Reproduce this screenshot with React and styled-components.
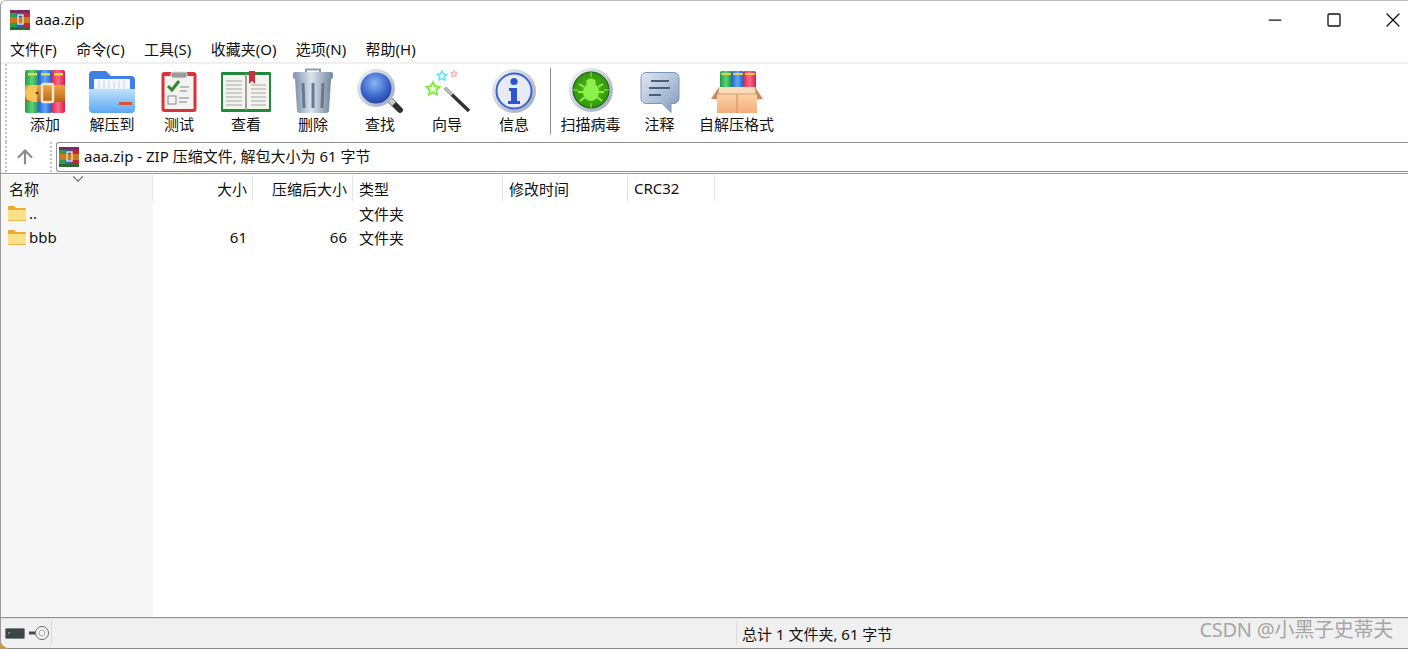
import React from 'react';
import styled, { createGlobalStyle } from 'styled-components';
import { ArrowUp, Minus, Square, X, ChevronDown } from 'lucide-react';

const GlobalStyle = createGlobalStyle`
  html, body { margin: 0; padding: 0; background: #fff; }
  body { font-family: "Noto Sans", "Noto Sans CJK SC", sans-serif; font-size: 15px; color: #111; overflow: hidden; }
`;

const Desktop = styled.div`
  width: 1408px;
  height: 649px;
  background: linear-gradient(#fff 50%, #c79d3c 50%);
`;

const Window = styled.div`
  position: relative;
  display: flex;
  flex-direction: column;
  width: 100%;
  height: 100%;
  box-sizing: border-box;
  border-top: 1px solid #bdbdbd;
  border-left: 1px solid #9a9a9a;
  border-bottom: 1px solid #8a8a8a;
  border-top-left-radius: 6px;
  border-bottom-left-radius: 9px;
  background: #fff;
  overflow: hidden;
`;

const TitleBar = styled.div`
  display: flex;
  align-items: center;
  height: 37px;
  padding-left: 9px;
  flex: none;
`;

const TitleText = styled.span`
  margin-left: 5px;
  padding-bottom: 2px;
`;

const WindowButtons = styled.div`
  display: flex;
  gap: 29px;
  margin-left: auto;
`;

const WindowButton = styled.div`
  display: flex;
  align-items: center;
  justify-content: center;
  width: 30px;
  height: 37px;
  color: #111;
`;

const MenuBar = styled.div`
  display: flex;
  align-items: center;
  height: 24px;
  box-sizing: content-box;
  padding-left: 9px;
  gap: 19.4px;
  flex: none;
  border-bottom: 2px solid #f0f0f0;
`;

const MenuItem = styled.span`
  padding-bottom: 3px;
  white-space: nowrap;
`;

const ToolBar = styled.div`
  display: flex;
  align-items: flex-start;
  height: 78px;
  padding-left: 4px;
  flex: none;
`;

const Gripper = styled.div`
  align-self: stretch;
  width: 0;
  margin-right: ${(p) => p.$gap}px;
  border-left: 2px dotted #c4c4c4;
`;

const ToolButton = styled.div`
  display: flex;
  flex-direction: column;
  align-items: center;
  width: ${(p) => p.$width || 67}px;
  flex: none;
  padding-top: 4px;
`;

const ToolIcon = styled.div`
  display: flex;
  justify-content: center;
  height: 46px;
`;

const ToolLabel = styled.span`
  height: 20px;
  line-height: 20px;
  white-space: nowrap;
`;

const ToolSeparator = styled.div`
  width: 1px;
  height: 66px;
  margin: 4px 3px 0 2px;
  background: #8c8c8c;
  flex: none;
`;

const AddressBar = styled.div`
  display: flex;
  align-items: stretch;
  height: 30px;
  padding-left: 4px;
  flex: none;
`;

const UpButton = styled.div`
  display: flex;
  align-items: center;
  justify-content: center;
  width: 36px;
  margin-right: 7px;
  color: #8a8a8a;
`;

const AddressField = styled.div`
  display: flex;
  align-items: center;
  flex: 1;
  padding-left: 2px;
  border: 1px solid #8f8f8f;
  border-right: none;
  border-top-left-radius: 3px;
  border-bottom-left-radius: 3px;
`;

const AddressText = styled.span`
  margin-left: 5px;
  padding-bottom: 3px;
`;

const FileArea = styled.div`
  position: relative;
  flex: 1;
  display: flex;
  flex-direction: column;
  min-height: 0;
  margin-top: 1px;
  border-top: 1px solid #9a9a9a;
`;

const SortArrow = styled.div`
  position: absolute;
  top: -4px;
  left: 68px;
  color: #777;
  line-height: 0;
`;

const FileRow = styled.div`
  display: grid;
  grid-template-columns: 152px 100px 100px 150px 125px 87px 1fr;
  height: ${(p) => p.$height || 24}px;
  align-items: center;
  flex: none;
`;

const HeaderRow = styled(FileRow)`
  margin-top: 1px;
`;

const HeaderCell = styled.div`
  display: flex;
  align-items: center;
  height: 100%;
  box-sizing: border-box;
  padding: 0 5px 0 ${(p) => (p.$sorted ? 8 : 6)}px;
  justify-content: ${(p) => (p.$right ? 'flex-end' : 'flex-start')};
  border-right: 1px solid #e4e4e4;
  background: ${(p) => (p.$sorted ? '#f7f7f7' : 'transparent')};
`;

const Cell = styled.div`
  display: flex;
  align-items: center;
  height: 100%;
  box-sizing: border-box;
  padding: 0 6px;
  justify-content: ${(p) => (p.$right ? 'flex-end' : 'flex-start')};
  background: ${(p) => (p.$sorted ? '#f7f7f7' : 'transparent')};
`;

const NameCell = styled(Cell)`
  padding-left: 7px;
  gap: 3px;
`;

const EmptyColumn = styled.div`
  flex: 1;
  width: 152px;
  background: #f7f7f7;
`;

const StatusBar = styled.div`
  display: flex;
  align-items: stretch;
  height: 31px;
  flex: none;
  box-sizing: border-box;
  border-top: 1px solid #8f8f8f;
  background: #f0f0f0;
  box-shadow: inset 0 1px 0 #e2e2e2;
`;

const StatusIcons = styled.div`
  display: flex;
  align-items: center;
  gap: 4px;
  width: 51px;
  padding-left: 4px;
  box-sizing: border-box;
  border-right: 1px solid #dcdcdc;
  margin: 3px 0;
`;

const StatusSpacer = styled.div`
  width: 684px;
  border-right: 1px solid #dcdcdc;
  margin: 3px 0;
`;

const StatusText = styled.div`
  display: flex;
  align-items: center;
  padding-left: 5px;
`;

const Watermark = styled.div`
  position: absolute;
  right: 15px;
  bottom: 5px;
  font-size: 20px;
  letter-spacing: -0.25px;
  color: #a6a6a6;
  white-space: nowrap;
`;

const WinRarIcon = () => (
  <svg width="20" height="20" viewBox="0 0 20 20">
    <rect x="0" y="0" width="7" height="20" fill="#2f9e44" />
    <rect x="6.5" y="0" width="7" height="20" fill="#2b62c9" />
    <rect x="13" y="0" width="7" height="20" fill="#c8233c" />
    <rect x="0" y="0" width="20" height="3" fill="#7a2c5e" />
    <rect x="0" y="7" width="20" height="6" fill="#c77a22" />
    <rect x="8" y="5" width="5" height="9" fill="none" stroke="#e8e0c8" strokeWidth="1.4" />
    <rect x="0" y="17" width="20" height="3" fill="#2c6b2f" />
  </svg>
);

const Shared = () => (
  <svg width="0" height="0" style={{ position: 'absolute' }}>
    <defs>
      <linearGradient id="gGreen" x1="0" x2="1" y1="0" y2="0">
        <stop offset="0" stopColor="#1f9a45" /><stop offset=".5" stopColor="#5fd07a" /><stop offset="1" stopColor="#1c8f40" />
      </linearGradient>
      <linearGradient id="gBlue" x1="0" x2="1" y1="0" y2="0">
        <stop offset="0" stopColor="#1d5fd0" /><stop offset=".5" stopColor="#62a6f5" /><stop offset="1" stopColor="#1c58c4" />
      </linearGradient>
      <linearGradient id="gRed" x1="0" x2="1" y1="0" y2="0">
        <stop offset="0" stopColor="#d91f45" /><stop offset=".5" stopColor="#fb6d8a" /><stop offset="1" stopColor="#d71e48" />
      </linearGradient>
      <linearGradient id="gBelt" x1="0" x2="0" y1="0" y2="1">
        <stop offset="0" stopColor="#f0a63a" /><stop offset="1" stopColor="#b9651c" />
      </linearGradient>
      <linearGradient id="gFolder" x1="0" x2="0" y1="0" y2="1">
        <stop offset="0" stopColor="#bfe0fd" /><stop offset="1" stopColor="#5aa8f2" />
      </linearGradient>
      <linearGradient id="gTrash" x1="0" x2="1" y1="0" y2="0">
        <stop offset="0" stopColor="#7f93ac" /><stop offset=".45" stopColor="#dbe3ec" /><stop offset="1" stopColor="#75889f" />
      </linearGradient>
      <radialGradient id="gLens" cx=".45" cy=".35" r=".7">
        <stop offset="0" stopColor="#8db4f2" /><stop offset=".6" stopColor="#3c69cc" /><stop offset="1" stopColor="#1f3f9e" />
      </radialGradient>
      <linearGradient id="gRing" x1="0" x2="1" y1="0" y2="1">
        <stop offset="0" stopColor="#f4f6fa" /><stop offset="1" stopColor="#9aa7b8" />
      </linearGradient>
      <radialGradient id="gBug" cx=".5" cy=".5" r=".6">
        <stop offset="0" stopColor="#55c41c" /><stop offset="1" stopColor="#2a8a0c" />
      </radialGradient>
      <linearGradient id="gNote" x1="0" x2="1" y1="0" y2="1">
        <stop offset="0" stopColor="#dfe8f3" /><stop offset=".6" stopColor="#a9bcd6" /><stop offset="1" stopColor="#7a93b8" />
      </linearGradient>
      <linearGradient id="gBox" x1="0" x2="0" y1="0" y2="1">
        <stop offset="0" stopColor="#fbd3a9" /><stop offset="1" stopColor="#f4ad7c" />
      </linearGradient>
    </defs>
  </svg>
);

const AddIcon = () => (
  <svg width="48" height="48" viewBox="0 0 48 48">
    <rect x="4" y="2" width="14" height="43" rx="2" fill="url(#gGreen)" />
    <rect x="17" y="2" width="14" height="43" rx="2" fill="url(#gBlue)" />
    <rect x="30" y="2" width="14" height="43" rx="2" fill="url(#gRed)" />
    <rect x="7" y="5" width="9" height="2.5" fill="#e8d84a" />
    <rect x="20" y="5" width="9" height="2.5" fill="#e8d84a" />
    <rect x="33" y="5" width="9" height="2.5" fill="#e8d84a" />
    <rect x="4" y="17" width="40" height="17" rx="2" fill="url(#gBelt)" />
    <path d="M12 17 a8 8.5 0 0 0 0 17 h4 v-17 z" fill="#f7c65a" />
    <rect x="21" y="16" width="11" height="18" rx="1.5" fill="none" stroke="#efe6d2" strokeWidth="2.5" />
    <circle cx="16" cy="25" r="1.3" fill="#6a3b10" />
  </svg>
);

const ExtractIcon = () => (
  <svg width="48" height="48" viewBox="0 0 48 48">
    <path d="M1 7 a4 4 0 0 1 4 -4 h13 l5 5 h20 a4 4 0 0 1 4 4 v26 h-46 z" fill="#3f7fe6" />
    <rect x="6" y="11" width="36" height="14" fill="#f4f7fb" />
    <path d="M11 13v10M16 13v10M21 13v10M26 13v10M31 13v10M36 13v10" stroke="#c6d2e2" strokeWidth="1" />
    <path d="M1 21 h46 v20 a4 4 0 0 1 -4 4 h-38 a4 4 0 0 1 -4 -4 z" fill="url(#gFolder)" />
    <rect x="31" y="34" width="13" height="3" fill="#e2502e" />
  </svg>
);

const TestIcon = () => (
  <svg width="48" height="48" viewBox="0 0 48 48">
    <rect x="6.5" y="4" width="35" height="40" rx="3" fill="#d9323a" />
    <rect x="9.5" y="8" width="29" height="33" fill="#f3f3f0" />
    <rect x="16" y="4" width="16" height="6" rx="2" fill="#9a9a9a" stroke="#e0e0e0" />
    <path d="M13 18 l4 4 l7 -9" fill="none" stroke="#2f8a2f" strokeWidth="3" />
    <rect x="13" y="28" width="8" height="8" fill="none" stroke="#888" />
    <path d="M25 19h9M25 23h7M24 30h10M24 34h8" stroke="#a8a8a8" strokeWidth="1.4" />
  </svg>
);

const ViewIcon = () => (
  <svg width="52" height="48" viewBox="0 0 52 48">
    <rect x="1" y="4" width="50" height="40" rx="1" fill="#1f8a3a" />
    <path d="M3 7 H25 V41 H3 Z" fill="#f4f4ef" />
    <path d="M27 7 H49 V41 H27 Z" fill="#f4f4ef" />
    <rect x="25" y="6" width="2" height="36" fill="#a0a0a0" />
    <path d="M6 13h16M6 17h16M6 21h16M6 25h16M6 29h16M6 33h16M6 37h16M31 17h15M31 21h15M31 25h15M31 29h15M31 33h15M31 37h15" stroke="#bdbdbd" strokeWidth="1.5" />
    <path d="M29 3 h6 v13 l-3 -3 l-3 3 z" fill="#c8303a" />
  </svg>
);

const DeleteIcon = () => (
  <svg width="48" height="48" viewBox="0 0 48 48">
    <path d="M17 5 V1.5 h14 V5" fill="none" stroke="#8d9cb0" strokeWidth="2" />
    <rect x="4" y="4" width="40" height="7" rx="2" fill="url(#gTrash)" />
    <path d="M6 11 h36 l-2 32 a3 3 0 0 1 -3 2 h-26 a3 3 0 0 1 -3 -2 z" fill="url(#gTrash)" />
    <path d="M14 15 l1 25M24 15 v25M34 15 l-1 25" stroke="#67788f" strokeWidth="3" />
  </svg>
);

const FindIcon = () => (
  <svg width="48" height="48" viewBox="0 0 48 48">
    <path d="M32 30 L44 42" stroke="#2e2e33" strokeWidth="6" strokeLinecap="round" />
    <path d="M32 30 L38 36" stroke="#c8ccd2" strokeWidth="5" />
    <circle cx="20" cy="20" r="19" fill="url(#gRing)" />
    <circle cx="20" cy="20" r="15.5" fill="url(#gLens)" />
  </svg>
);

const starPoints = (cx, cy, r) =>
  Array.from({ length: 10 }, (_, i) => {
    const a = (Math.PI / 5) * i - Math.PI / 2;
    const d = i % 2 ? r * 0.5 : r;
    return `${(cx + d * Math.cos(a)).toFixed(2)},${(cy + d * Math.sin(a)).toFixed(2)}`;
  }).join(' ');

const Star = ({ cx, cy, r, color, glow }) => (
  <g>
    <polygon points={starPoints(cx, cy, r)} fill={color} />
    <polygon points={starPoints(cx, cy, r * 0.55)} fill={glow} />
  </g>
);

const WizardIcon = () => (
  <svg width="48" height="48" viewBox="0 0 48 48">
    <Star cx={19} cy={8} r={6.5} color="#4fe3f7" glow="#e8fbff" />
    <Star cx={31} cy={6} r={4.5} color="#f7a0aa" glow="#ffeef0" />
    <Star cx={10} cy={21} r={9} color="#86e83c" glow="#e6ffd0" />
    <path d="M22 20 L46 43" stroke="#333" strokeWidth="3.5" />
    <path d="M22 20 L29 26.7" stroke="#bbb" strokeWidth="3.5" />
  </svg>
);

const InfoIcon = () => (
  <svg width="46" height="46" viewBox="0 0 46 46">
    <circle cx="23" cy="23" r="22" fill="url(#gRing)" />
    <circle cx="23" cy="23" r="17.5" fill="#e7ebf3" stroke="#3d62d6" strokeWidth="2" />
    <circle cx="23" cy="13.5" r="3.6" fill="#2d55cf" />
    <path d="M18 20 h8 v13 h3 v3 h-12 v-3 h3 v-10 h-2 z" fill="#2d55cf" />
  </svg>
);

const ScanIcon = () => (
  <svg width="46" height="46" viewBox="0 0 46 46">
    <circle cx="23" cy="22" r="22" fill="url(#gRing)" />
    <circle cx="23" cy="22" r="18" fill="url(#gBug)" stroke="#17560a" />
    <g stroke="#8df04a" strokeWidth="2" fill="none">
      <path d="M23 4v5M23 35v5M5 22h5M36 22h5" strokeWidth="1" />
      <path d="M16 19l-5-3M16 24h-6M17 29l-5 4M30 19l5-3M30 24h6M29 29l5 4M19 12l2 3M27 12l-2 3" />
    </g>
    <ellipse cx="23" cy="24" rx="8" ry="9" fill="#8df04a" />
    <circle cx="23" cy="15" r="4.5" fill="#8df04a" />
  </svg>
);

const CommentIcon = () => (
  <svg width="40" height="46" viewBox="0 0 40 46">
    <path d="M6 4.5 h28 a5 5 0 0 1 5 5 v21 a5 5 0 0 1 -5 5 h-3 v9 l-9 -9 h-16 a5 5 0 0 1 -5 -5 v-21 a5 5 0 0 1 5 -5 z" fill="url(#gNote)" stroke="#7f95b8" />
    <path d="M11 13h18M9 20h21M9 27h12" stroke="#4f5d70" strokeWidth="2.2" />
  </svg>
);

const SfxIcon = () => (
  <svg width="54" height="46" viewBox="0 0 54 46">
    <rect x="10" y="3" width="12" height="24" rx="2" fill="url(#gGreen)" />
    <rect x="21" y="3" width="13" height="24" rx="2" fill="url(#gBlue)" />
    <rect x="33" y="3" width="13" height="24" rx="2" fill="url(#gRed)" />
    <path d="M11 6h10M23 6h10M35 6h10" stroke="#e8cf3d" strokeWidth="2.2" />
    <path d="M9 19 H45 L50 32 H4 Z" fill="#f8dcb9" />
    <path d="M9 19 L1 31 H8 Z M45 19 L53 31 H46 Z" fill="#c98a5f" />
    <rect x="7" y="26" width="40" height="19" fill="url(#gBox)" />
    <path d="M27 26v19" stroke="#c98a5f" />
    <path d="M7 26 H47" stroke="#d89a6b" />
  </svg>
);

const FolderIcon = () => (
  <svg width="18" height="15" viewBox="0 0 18 15">
    <path d="M0 1 a1 1 0 0 1 1 -1 h5 l2 2 h9 a1 1 0 0 1 1 1 v11 a1 1 0 0 1 -1 1 h-16 a1 1 0 0 1 -1 -1 z" fill="#eea92e" />
    <path d="M0 4 h18 v10 a1 1 0 0 1 -1 1 h-16 a1 1 0 0 1 -1 -1 z" fill="#fde08a" />
    <path d="M0 14.5 h18" stroke="#e8b84a" />
  </svg>
);

const DriveIcon = () => (
  <svg width="20" height="11" viewBox="0 0 20 11">
    <rect x="0.5" y="0.5" width="19" height="10" rx="1" fill="#3c4448" stroke="#7b8488" />
    <rect x="3" y="4" width="2" height="2" fill="#5e9a5e" />
  </svg>
);

const KeyIcon = () => (
  <svg width="20" height="16" viewBox="0 0 20 16">
    <path d="M0 8 h11" stroke="#4a4a4a" strokeWidth="3" />
    <circle cx="13" cy="8" r="6.5" fill="#f5f5f5" stroke="#6a6a6a" />
    <circle cx="13" cy="8" r="3" fill="none" stroke="#aaa" />
  </svg>
);

const tools = [
  { label: '添加', icon: <AddIcon /> },
  { label: '解压到', icon: <ExtractIcon /> },
  { label: '测试', icon: <TestIcon /> },
  { label: '查看', icon: <ViewIcon /> },
  { label: '删除', icon: <DeleteIcon /> },
  { label: '查找', icon: <FindIcon /> },
  { label: '向导', icon: <WizardIcon /> },
  { label: '信息', icon: <InfoIcon /> },
];

const moreTools = [
  { label: '扫描病毒', icon: <ScanIcon />, width: 74 },
  { label: '注释', icon: <CommentIcon />, width: 64 },
  { label: '自解压格式', icon: <SfxIcon />, width: 90 },
];

const menus = ['文件(F)', '命令(C)', '工具(S)', '收藏夹(O)', '选项(N)', '帮助(H)'];

const columns = [
  { label: '大小', right: true },
  { label: '压缩后大小', right: true },
  { label: '类型' },
  { label: '修改时间' },
  { label: 'CRC32' },
];

const files = [
  { name: '..', size: '', packed: '', type: '文件夹' },
  { name: 'bbb', size: '61', packed: '66', type: '文件夹' },
];

const App = () => (
  <Desktop>
    <GlobalStyle />
    <Shared />
    <Window>
      <TitleBar>
        <WinRarIcon />
        <TitleText>aaa.zip</TitleText>
        <WindowButtons>
          <WindowButton><Minus size={20} strokeWidth={1.5} /></WindowButton>
          <WindowButton><Square size={16} strokeWidth={2} /></WindowButton>
          <WindowButton><X size={24} strokeWidth={1.3} /></WindowButton>
        </WindowButtons>
      </TitleBar>
      <MenuBar>
        {menus.map((m) => <MenuItem key={m}>{m}</MenuItem>)}
      </MenuBar>
      <ToolBar>
        <Gripper $gap={4.5} />
        {tools.map((t) => (
          <ToolButton key={t.label}>
            <ToolIcon>{t.icon}</ToolIcon>
            <ToolLabel>{t.label}</ToolLabel>
          </ToolButton>
        ))}
        <ToolSeparator />
        {moreTools.map((t) => (
          <ToolButton key={t.label} $width={t.width}>
            <ToolIcon>{t.icon}</ToolIcon>
            <ToolLabel>{t.label}</ToolLabel>
          </ToolButton>
        ))}
      </ToolBar>
      <AddressBar>
        <Gripper $gap={0} />
        <UpButton><ArrowUp size={22} strokeWidth={2.4} /></UpButton>
        <Gripper $gap={4} />
        <AddressField>
          <WinRarIcon />
          <AddressText>aaa.zip - ZIP 压缩文件, 解包大小为 61 字节</AddressText>
        </AddressField>
      </AddressBar>
      <FileArea>
        <SortArrow><ChevronDown size={18} strokeWidth={1.6} /></SortArrow>
        <HeaderRow $height={26}>
          <HeaderCell $sorted>名称</HeaderCell>
          {columns.map((c) => (
            <HeaderCell key={c.label} $right={c.right}>{c.label}</HeaderCell>
          ))}
        </HeaderRow>
        {files.map((f) => (
          <FileRow key={f.name}>
            <NameCell $sorted><FolderIcon />{f.name}</NameCell>
            <Cell $right>{f.size}</Cell>
            <Cell $right>{f.packed}</Cell>
            <Cell>{f.type}</Cell>
          </FileRow>
        ))}
        <EmptyColumn />
      </FileArea>
      <StatusBar>
        <StatusIcons><DriveIcon /><KeyIcon /></StatusIcons>
        <StatusSpacer />
        <StatusText>总计 1 文件夹, 61 字节</StatusText>
      </StatusBar>
      <Watermark>CSDN @小黑子史蒂夫</Watermark>
    </Window>
  </Desktop>
);

export default App;
